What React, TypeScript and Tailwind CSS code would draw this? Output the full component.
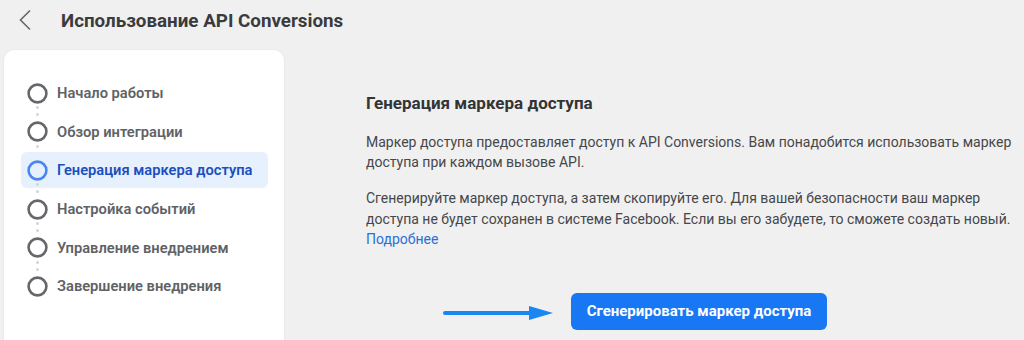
import React from "react";

const STEPS = [
	"Начало работы",
	"Обзор интеграции",
	"Генерация маркера доступа",
	"Настройка событий",
	"Управление внедрением",
	"Завершение внедрения",
];

const ACTIVE_STEP = 2;

function StepCircle({ active }: { active: boolean }) {
	return (
		<svg width="21" height="21" viewBox="0 0 21 21" className="shrink-0">
			<circle
				cx="10.5"
				cy="10.5"
				r="8.9"
				fill="none"
				stroke={active ? "#4b86ee" : "#65676b"}
				strokeWidth="2.6"
			/>
		</svg>
	);
}

function StepList() {
	return (
		<div className="flex flex-col gap-[2.7px] pl-[17px] pr-[16px] pt-[25px]">
			{STEPS.map((label, index) => {
				const active = index === ACTIVE_STEP;
				const isLast = index === STEPS.length - 1;
				return (
					<div
						key={label}
						className={`relative flex h-9 items-center gap-[9px] rounded-md pl-[6px] ${
							active ? "bg-[#e7f0fd]" : ""
						}`}
					>
						<StepCircle active={active} />
						<span
							className={`text-[14.7px] font-semibold ${
								active ? "text-[#1b4fbf]" : "text-[#606266]"
							}`}
						>
							{label}
						</span>
						{!isLast && (
							<>
								<span className="absolute left-[15px] top-[31px] h-[3px] w-[3px] rounded-full bg-[#d3d5d9]" />
								<span className="absolute left-[15px] top-[38px] h-[3px] w-[3px] rounded-full bg-[#d3d5d9]" />
							</>
						)}
					</div>
				);
			})}
		</div>
	);
}

export default function App() {
	return (
		<div
			className="h-[340px] w-[1024px] overflow-hidden bg-[#f0f0f0]"
			style={{ fontFamily: "Roboto, 'Noto Sans', sans-serif" }}
		>
			<header className="flex h-[50px] items-start">
				<button className="ml-[17px] mt-[9px] text-[#65676b]" aria-label="Назад">
					<svg width="17" height="22" viewBox="0 0 17 22" fill="none">
						<path d="M13 1.5 3.5 11 13 20.5" stroke="currentColor" strokeWidth="1.6" />
					</svg>
				</button>
				<h1 className="ml-[27px] mt-[7px] text-[18.8px] font-bold text-[#3a3b3d]">
					Использование API Conversions
				</h1>
			</header>

			<div className="flex">
				<aside className="ml-1 h-[300px] w-[280px] shrink-0 rounded-t-[10px] bg-white shadow-[0_0_2px_rgba(0,0,0,0.08)]">
					<StepList />
				</aside>

				<main className="ml-[82px] w-[666px] shrink-0 pt-[43px]">
					<h2 className="text-[17px] font-bold leading-5 text-[#333436]">
						Генерация маркера доступа
					</h2>
					<p className="mt-[19px] text-[14px] leading-5 text-[#45474b]">
						Маркер доступа предоставляет доступ к API Conversions. Вам понадобится использовать маркер
						доступа при каждом вызове API.
					</p>
					<p className="mt-4 text-[14px] leading-[20.7px] text-[#45474b]">
						Сгенерируйте маркер доступа, а затем скопируйте его. Для вашей безопасности ваш маркер
						доступа не будет сохранен в системе Facebook. Если вы его забудете, то сможете создать новый.
						<br />
						<a className="text-[#2a6fd6]">Подробнее</a>
					</p>

					<div className="relative mt-[43px] flex justify-center">
						<svg
							className="absolute left-[77px] top-[12px]"
							width="112"
							height="16"
							viewBox="0 0 112 16"
						>
							<line x1="2" y1="8" x2="90" y2="8" stroke="#1a86f2" strokeWidth="4" strokeLinecap="round" />
							<polygon points="86,1 110,8 86,15" fill="#1a86f2" />
						</svg>
						<button className="h-[37px] w-[256px] rounded-md bg-[#1877f2] text-[15px] font-bold text-white">
							Сгенерировать маркер доступа
						</button>
					</div>
				</main>
			</div>
		</div>
	);
}
